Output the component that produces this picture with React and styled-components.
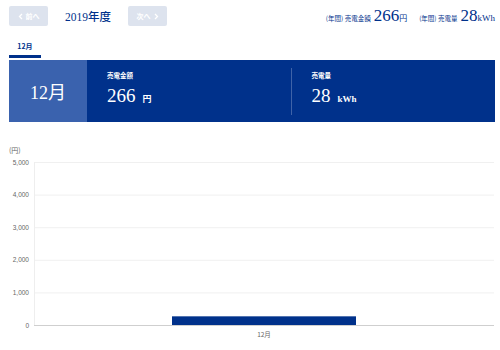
import React from "react";
import styled, { createGlobalStyle } from "styled-components";

const Global = createGlobalStyle`
  html, body { margin: 0; padding: 0; background: #fff; }
  body { font-family: "Liberation Serif", "Noto Sans CJK JP", serif; }
`;

const NAVY = "#00318b";

const Page = styled.div`
  width: 500px;
  height: 350px;
  overflow: hidden;
  background: #fff;
`;

const Header = styled.div`
  display: flex;
  align-items: center;
  height: 32px;
  padding: 0 5px 0 9px;
`;

const NavButton = styled.button`
  width: 39px;
  height: 20px;
  border: none;
  border-radius: 2px;
  background: #dde3ee;
  color: #fff;
  font-family: "Noto Sans CJK JP", sans-serif;
  font-size: 7px;
  font-weight: 700;
  display: flex;
  align-items: center;
  justify-content: center;
  gap: 3px;
  padding: 0;
`;

const YearTitle = styled.div`
  width: 80px;
  text-align: center;
  color: ${NAVY};
  font-family: "Liberation Serif", "Noto Sans CJK JP", serif;
  font-size: 11.5px;
  font-weight: 500;
`;

const Summary = styled.div`
  margin-left: auto;
  display: flex;
  align-items: baseline;
  gap: 12px;
  color: ${NAVY};
`;

const SummaryItem = styled.div`
  display: flex;
  align-items: baseline;
`;

const SmallLabel = styled.span`
  font-family: "Noto Sans CJK JP", serif;
  font-size: 6.5px;
  margin-right: 3px;
`;

const BigNum = styled.span`
  font-family: "Liberation Serif", serif;
  font-size: 17px;
`;

const Unit = styled.span`
  font-family: "Liberation Serif", "Noto Sans CJK JP", serif;
  font-size: ${(p) => p.$size || 8}px;
  font-weight: ${(p) => (p.$bold ? 700 : 400)};
`;

const Tabs = styled.div`
  display: flex;
  padding: 0 0 0 9px;
  height: 26px;
  align-items: flex-end;
`;

const Tab = styled.div`
  width: 32px;
  height: 24px;
  box-sizing: border-box;
  border-bottom: 3px solid ${NAVY};
  color: ${NAVY};
  font-family: "Noto Sans CJK JP", sans-serif;
  font-weight: 700;
  font-size: 7px;
  display: flex;
  align-items: center;
  justify-content: center;
  padding-top: 2px;
`;

const Band = styled.div`
  margin: 2px 5px 0 9px;
  height: 62px;
  display: flex;
  background: ${NAVY};
  color: #fff;
`;

const MonthBox = styled.div`
  width: 78px;
  background: #3a62ae;
  display: flex;
  align-items: center;
  justify-content: center;
  font-family: "Liberation Serif", "Noto Sans CJK JP", serif;
  font-size: 18px;
`;

const Stat = styled.div`
  flex: 1;
  padding: 10px 0 0 20px;
  & + & {
    border-left: 1px solid #3f63a8;
    margin: 8px 0 7px;
    padding-top: 2px;
  }
`;

const StatLabel = styled.div`
  font-family: "Noto Sans CJK JP", serif;
  font-size: 6.5px;
  font-weight: 700;
  height: 10px;
  line-height: 10px;
`;

const StatValue = styled.div`
  margin-top: 5px;
  display: flex;
  align-items: baseline;
  gap: 7px;
`;

const StatNum = styled.span`
  font-family: "Liberation Serif", serif;
  font-size: 19px;
`;

const ChartWrap = styled.div`
  margin-top: 18px;
  height: 210px;
`;

const ticks = [5000, 4000, 3000, 2000, 1000, 0];
const top = 22;
const bottom = 185;
const yFor = (v) => bottom - (v / 5000) * (bottom - top);

function Chart() {
  const value = 266;
  return (
    <svg width="500" height="210" viewBox="0 0 500 210">
      <text x="9" y="13" fontSize="7" fill="#666" fontFamily="'Noto Sans CJK JP', sans-serif">(円)</text>
      {ticks.map((t) => (
        <g key={t}>
          <line x1="34" x2="494" y1={yFor(t) + 0.5} y2={yFor(t) + 0.5} stroke={t === 0 ? "#cfcfcf" : "#f0f0f0"} strokeWidth="1" />
          <text x="29" y={yFor(t) + 2.5} fontSize="6.5" fill="#666" textAnchor="end" fontFamily="'Liberation Sans', sans-serif">
            {t.toLocaleString("en-US")}
          </text>
        </g>
      ))}
      <line x1="34.5" x2="34.5" y1={top} y2={bottom} stroke="#eeeeee" strokeWidth="1" />
      <rect x="172" y={yFor(value)} width="184" height={bottom - yFor(value)} fill={NAVY} />
      <text x="264" y="197" fontSize="6.5" fill="#666" textAnchor="middle" fontFamily="'Noto Sans CJK JP', sans-serif">12月</text>
    </svg>
  );
}

function Chevron({ dir }) {
  return (
    <svg width="5" height="7" viewBox="0 0 5 7">
      <path d={dir === "left" ? "M4 1 L1.5 3.5 L4 6" : "M1 1 L3.5 3.5 L1 6"} stroke="#fff" strokeWidth="1.3" fill="none" />
    </svg>
  );
}

export default function App() {
  return (
    <Page>
      <Global />
      <Header>
        <NavButton><Chevron dir="left" />前へ</NavButton>
        <YearTitle>2019年度</YearTitle>
        <NavButton>次へ<Chevron dir="right" /></NavButton>
        <Summary>
          <SummaryItem>
            <SmallLabel>(年間) 売電金額</SmallLabel>
            <BigNum>266</BigNum>
            <Unit $size={8}>円</Unit>
          </SummaryItem>
          <SummaryItem>
            <SmallLabel>(年間) 売電量</SmallLabel>
            <BigNum>28</BigNum>
            <Unit $size={9}>kWh</Unit>
          </SummaryItem>
        </Summary>
      </Header>
      <Tabs>
        <Tab>12月</Tab>
      </Tabs>
      <Band>
        <MonthBox>12月</MonthBox>
        <Stat>
          <StatLabel>売電金額</StatLabel>
          <StatValue>
            <StatNum>266</StatNum>
            <Unit $size={9} $bold>円</Unit>
          </StatValue>
        </Stat>
        <Stat>
          <StatLabel>売電量</StatLabel>
          <StatValue>
            <StatNum>28</StatNum>
            <Unit $size={9} $bold>kWh</Unit>
          </StatValue>
        </Stat>
      </Band>
      <ChartWrap>
        <Chart />
      </ChartWrap>
    </Page>
  );
}
